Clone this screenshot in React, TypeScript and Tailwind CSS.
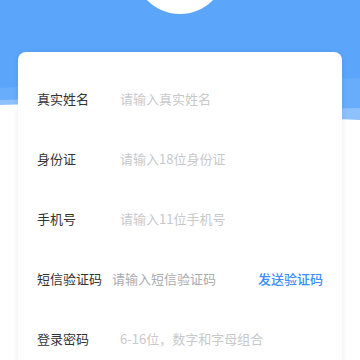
import React from 'react';

const fields = [
  { label: '真实姓名', placeholder: '请输入真实姓名', type: 'text' },
  { label: '身份证', placeholder: '请输入18位身份证', type: 'text' },
  { label: '手机号', placeholder: '请输入11位手机号', type: 'tel' },
];

function Field({ label, placeholder, type }: { label: string; placeholder: string; type: string }) {
  return (
    <div className="flex h-[60px] items-center px-[19px]">
      <span className="w-[83px] shrink-0 text-[13px] text-[#333]">{label}</span>
      <input
        type={type}
        placeholder={placeholder}
        className="min-w-0 flex-1 bg-transparent text-[13px] text-[#333] outline-none placeholder:text-[#c8c9cc]"
      />
    </div>
  );
}

export default function App() {
  return (
    <div
      className="h-[360px] w-full overflow-hidden bg-white"
      style={{ fontFamily: '"Noto Sans CJK SC", "Noto Sans", sans-serif' }}
    >
      {/* 顶部蓝色背景 */}
      <div className="relative h-[122px] bg-[#5ba6fb]">
        <div className="absolute left-1/2 top-[-78px] h-[92px] w-[92px] -translate-x-1/2 rounded-full bg-white" />
        <svg className="absolute inset-0 h-full w-full" viewBox="0 0 360 122" preserveAspectRatio="none">
          <path d="M0,88 C120,80 240,84 360,78 L360,122 L0,122 Z" fill="white" fillOpacity="0.08" />
          <path d="M0,100 C120,96 240,112 360,108 L360,122 L0,122 Z" fill="white" fillOpacity="0.25" />
          <path d="M0,105 C120,100 240,116 360,120 L360,122 L0,122 Z" fill="white" />
        </svg>
      </div>

      {/* 表单卡片 */}
      <div className="relative mx-[18px] -mt-[70px] rounded-[8px] bg-white pt-[17px] shadow-[0_0_6px_rgba(0,0,0,0.08)]">
        {fields.map((f) => (
          <Field key={f.label} {...f} />
        ))}
        <div className="flex h-[60px] items-center px-[19px]">
          <span className="w-[75px] shrink-0 text-[13px] text-[#333]">短信验证码</span>
          <input
            type="text"
            placeholder="请输入短信验证码"
            className="min-w-0 flex-1 bg-transparent text-[13px] text-[#333] outline-none placeholder:text-[#a9acb2]"
          />
          <button className="shrink-0 text-[13px] font-medium text-[#3d8ef7]">发送验证码</button>
        </div>
        <Field label="登录密码" placeholder="6-16位，数字和字母组合" type="password" />
      </div>
    </div>
  );
}
